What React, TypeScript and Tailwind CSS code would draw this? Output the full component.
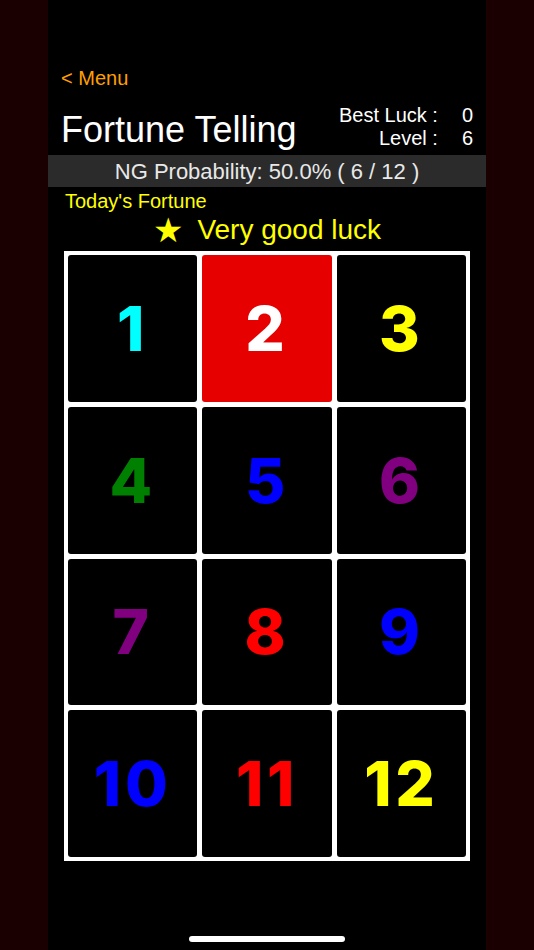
const cells = [
  { n: 1, color: 'text-[#00ffff]' },
  { n: 2, color: 'text-white', active: true },
  { n: 3, color: 'text-[#ffff00]' },
  { n: 4, color: 'text-[#008000]' },
  { n: 5, color: 'text-[#0000ff]' },
  { n: 6, color: 'text-[#800080]' },
  { n: 7, color: 'text-[#800080]' },
  { n: 8, color: 'text-[#ff0000]' },
  { n: 9, color: 'text-[#0000ff]' },
  { n: 10, color: 'text-[#0000ff]' },
  { n: 11, color: 'text-[#ff0000]' },
  { n: 12, color: 'text-[#ffff00]' },
];

export default function App() {
  return (
    <div className="flex h-[950px] w-[534px] bg-[#1a0000] font-['Liberation_Sans',Arial,sans-serif]">
      <div className="ml-[48px] flex h-full w-[438px] flex-col bg-black">
        <div className="px-[13px] pt-[66px] text-[20px] leading-[24px] text-[#ff9f00]">&lt; Menu</div>

        <div className="mt-[14px] flex items-end justify-between px-[13px]">
          <h1 className="mb-[0px] text-[36px] leading-[40px] text-white">Fortune Telling</h1>
          <div className="grid grid-cols-[auto_auto] gap-x-[24px] text-[20px] leading-[23px] text-white">
            <span className="text-right">Best Luck :</span>
            <span className="text-right">0</span>
            <span className="text-right">Level :</span>
            <span className="text-right">6</span>
          </div>
        </div>

        <div className="mt-[5px] flex h-[32px] items-center justify-center bg-[#2b2b2b] text-[22px] text-[#e8e8e8]">
          NG Probability: 50.0% ( 6 / 12 )
        </div>

        <div className="px-[17px] pt-[2px] text-[20px] leading-[24px] text-[#ffff00]">Today's Fortune</div>
        <div className="mt-[1px] flex items-center justify-center gap-[14px] text-[28px] leading-[32px] text-[#ffff00]">
          <span className="font-['DejaVu_Sans',sans-serif] text-[34px] leading-[32px]">★</span>
          <span>Very good luck</span>
        </div>

        <div className="mx-[16px] mt-[5px] grid h-[610px] grid-cols-3 grid-rows-4 gap-[5px] bg-white p-[4px]">
          {cells.map((c) => (
            <div
              key={c.n}
              className={`flex items-center justify-center rounded-[3px] ${c.active ? 'bg-[#e60000]' : 'bg-black'}`}
            >
              <span className={`font-['Inter',sans-serif] text-[62px] font-extrabold tracking-[0.06em] ${c.color}`}>
                {c.n}
              </span>
            </div>
          ))}
        </div>

        <div className="mt-auto mb-[8px] flex justify-center">
          <div className="h-[6px] w-[156px] rounded-full bg-white" />
        </div>
      </div>
    </div>
  );
}
